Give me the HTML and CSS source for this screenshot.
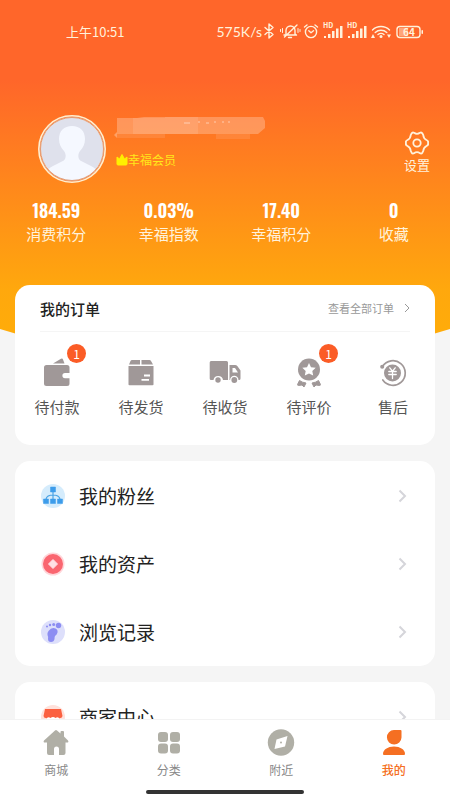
FILE: index.html
```html
<!DOCTYPE html>
<html lang="zh-CN">
<head>
<meta charset="utf-8">
<meta name="viewport" content="width=device-width, initial-scale=1">
<title>我的</title>
<link rel="stylesheet" href="styles.css">
</head>
<body>
<div class="app">
  <main class="content">
    <section class="hero">
      <div class="status">
        <time class="clock">上午10:51</time>
        <div class="signals">
          <span class="speed">575K/s</span>
          <svg width="164" height="20" viewBox="0 0 164 20" fill="none" stroke="currentColor" stroke-width="1.4" stroke-linecap="round" stroke-linejoin="round" aria-hidden="true">
            <path d="M3 6.500l8 7-4 3.500v-14l4 3.500-8 7"/>
            <path d="M22 14h12M24 13V9.500a4.500 4.500 0 0 1 9 0V13l1.500 1M26.500 16.500h3M35 4 22.500 16"/>
            <path d="M20.500 7.500v4M18.500 8.500v2M36 7.500v4M38 8.500v2" stroke-width="1"/>
            <circle cx="49" cy="11" r="5.600"/>
            <path d="m42.500 6 2.500-2M55.500 6 53 4M46.800 9.800 49 11.700l2.500-2"/>
            <g stroke="none" fill="currentColor">
              <text x="61" y="7" font-size="7" font-weight="700">HD</text>
              <text x="85" y="7" font-size="7" font-weight="700">HD</text>
              <rect x="62" y="15" width="2" height="2"/><rect x="66" y="13" width="2.500" height="4"/><rect x="70" y="10" width="2.500" height="7"/><rect x="74" y="7.500" width="2.500" height="9.500"/><rect x="78" y="5" width="2.500" height="12"/>
              <rect x="86" y="15" width="2" height="2"/><rect x="90" y="13" width="2.500" height="4"/><rect x="94" y="10" width="2.500" height="7"/><rect x="98" y="7.500" width="2.500" height="9.500"/><rect x="102" y="5" width="2.500" height="12"/>
              <circle cx="119" cy="15.500" r="1.500"/>
              <path d="m111 13 2 4h-4zM127 17l-2-3.500h4z"/>
              <rect x="137" y="7" width="9" height="8" opacity=".45"/>
              <text x="141" y="14.500" font-size="10" font-weight="700">64</text>
              <rect x="159.500" y="9" width="1.500" height="4" rx=".7"/>
            </g>
            <path d="M110.500 9a12 12 0 0 1 17 0M113.200 11.500a8.500 8.500 0 0 1 11.600 0M116 13.500a5 5 0 0 1 6 0"/>
            <rect x="135" y="5.500" width="23" height="11" rx="3"/>
          </svg>
        </div>
      </div>

      <div class="profile">
        <svg class="avatar" viewBox="0 0 68 68" role="img" aria-label="头像">
          <defs><clipPath id="face"><circle cx="34" cy="34" r="31"/></clipPath></defs>
          <circle cx="34" cy="34" r="33.200" fill="#f78043" stroke="#ffefd0" stroke-width="1.600"/>
          <circle cx="34" cy="34" r="31.800" fill="#fff0df"/>
          <g clip-path="url(#face)">
            <rect width="68" height="68" fill="#dfe1ec"/>
            <path d="M34 11c8 0 13 5 13 13 0 5-2 9-5 12-2 3-2 6-1 8 2 4 14 5 20 14v14H7V58c6-9 18-10 20-14 1-2 1-5-1-8-3-3-5-7-5-12 0-8 5-13 13-13z" fill="#f5f8ff"/>
          </g>
          <circle cx="34" cy="34" r="31.500" fill="none" stroke="#d98a60" stroke-width=".8"/>
        </svg>
        <div class="identity">
          <svg class="masked" viewBox="0 0 156 24" aria-hidden="true">
            <path d="M3 3h20l7-1h119l2 4v7l-7 6H3z" fill="#fff" opacity=".25"/>
            <path d="M19 3h32v16H19zM51 2h33v17H51z" fill="#fff" opacity=".1"/>
            <path d="M3 19h48v4H3zM102 19h34v5h-34z" fill="#fff" opacity=".1"/>
            <path d="m0 20 3-3v6z" fill="#fff" opacity=".3"/>
            <path d="M70 8h6M84 7h2M92 8h3M100 7h2M108 7h2M114 7h2" stroke="#fff" opacity=".5"/>
          </svg>
          <span class="level">
            <svg width="12" height="12" viewBox="0 0 12 12" aria-hidden="true"><path d="m1 3 2.500 2L6 .5 8.500 5 11 3v7q0 1-1 1H2q-1 0-1-1z" fill="#fff000" stroke="#fff000" stroke-linejoin="round"/></svg>幸福会员
          </span>
        </div>
        <button class="settings" type="button">
          <svg width="24" height="24" viewBox="0 0 24 24" fill="none" stroke="currentColor" stroke-width="1.800" stroke-linejoin="round" aria-hidden="true">
            <path d="M6.500 2.600Q7.500 1 9 1.800Q12 3.800 15 1.800Q16.500 1 17.500 2.600L18.300 4.200Q18.500 7.400 21.500 9Q23.700 10 23 12Q23.700 14 21.500 15Q18.500 16.600 18.300 19.800L17.500 21.400Q16.500 23 15 22.200Q12 20.200 9 22.200Q7.500 23 6.500 21.400L5.700 19.800Q5.500 16.600 2.500 15Q.3 14 1 12Q.3 10 2.500 9Q5.500 7.400 5.700 4.200Z"/>
            <circle cx="12" cy="12" r="3.700"/>
          </svg>
          设置
        </button>
      </div>

      <dl class="stats">
        <div><dt>消费积分</dt><dd>184.59</dd></div>
        <div><dt>幸福指数</dt><dd>0.03%</dd></div>
        <div><dt>幸福积分</dt><dd>17.40</dd></div>
        <div><dt>收藏</dt><dd>0</dd></div>
      </dl>
    </section>

    <section class="card orders">
      <header class="orders-head">
        <h2>我的订单</h2>
        <a href="#orders">查看全部订单
          <svg width="6" height="10" viewBox="0 0 6 10" fill="none" stroke="currentColor" aria-hidden="true"><path d="m1 1 4 4-4 4"/></svg>
        </a>
      </header>
      <nav class="order-types">
        <a href="#pay">
          <span class="type-icon">
            <svg width="30" height="30" viewBox="0 0 30 30" fill="currentColor" aria-hidden="true"><path d="M4.500 7H25q2.500 0 2.500 2.500V15H23a2.600 2.600 0 0 0 0 5.200h4.500v5.300q0 2.500-2.500 2.500H4.500Q2 28 2 25.500v-16Q2 7 4.500 7zM11 5.500 19 .8q1.500-.8 2 .7l1.500 4z"/></svg>
            <b class="badge">1</b>
          </span>待付款
        </a>
        <a href="#ship">
          <span class="type-icon">
            <svg width="30" height="30" viewBox="0 0 30 30" fill="currentColor" aria-hidden="true"><path d="M6 2h8v4.500H3L4.500 3Q5 2 6 2zm9.500 0h8q1 0 1.500 1l2 3.500H15.500zM2.500 8h25v18.500q0 .8-1 .8h-23q-1 0-1-.8z"/><path d="M18 17.500h6M15.500 21.800H23" stroke="#fff" stroke-width="1.800"/></svg>
          </span>待发货
        </a>
        <a href="#receive">
          <span class="type-icon">
            <svg width="32" height="30" viewBox="0 0 32 30" fill="currentColor" aria-hidden="true"><path d="M2 3h15.500Q19 3 19 4.500V22h-5a4.800 4.800 0 0 0-9.500 0H2Q.7 22 .7 20.500v-16Q.7 3 2 3z"/><path fill-rule="evenodd" d="M20.500 7H26q1.500 0 2.500 1.200l3 4.300v8q0 1.500-1.500 1.500h-.5a4.200 4.200 0 0 0-8.400 0h-.6zm3 3v4.500H29L26 10z"/><circle cx="9" cy="22" r="2.700"/><circle cx="25.300" cy="22" r="2.900"/></svg>
          </span>待收货
        </a>
        <a href="#review">
          <span class="type-icon">
            <svg width="30" height="30" viewBox="0 0 30 30" fill="currentColor" aria-hidden="true"><circle cx="15" cy="11.500" r="11"/><path d="m15 5 2 4.200 4.700.6-3.400 3.200.9 4.600-4.200-2.200-4.200 2.200.9-4.600-3.400-3.200 4.700-.6z" fill="#fff"/><path d="M5.500 22.500q2.500 2 6.500 2.500l-2 4-2-2-3.500.5q-1 0-1-1zM24.500 22.500q-2.500 2-6.500 2.500l2 4 2-2 3.500.5q1 0 1-1z" stroke="currentColor" stroke-linejoin="round"/></svg>
            <b class="badge">1</b>
          </span>待评价
        </a>
        <a href="#service">
          <span class="type-icon">
            <svg width="30" height="30" viewBox="0 0 30 30" fill="none" stroke="currentColor" stroke-width="1.700" stroke-linecap="round" aria-hidden="true"><path d="M4.500 8.500a12.300 12.300 0 1 1 .3 13.500"/><circle cx="4.200" cy="8.700" r="1.200" fill="currentColor"/><circle cx="14.500" cy="15" r="8.500" fill="currentColor" stroke="none"/><path d="m11.800 9.800 2.700 3.400 2.700-3.400M10.800 13.500h7.400M10.800 16.500h7.400M14.500 13.500v7" stroke="#fff" stroke-width="1.300"/></svg>
          </span>售后
        </a>
      </nav>
    </section>

    <nav class="card menu">
      <a href="#fans">
        <svg class="menu-icon" viewBox="0 0 24 24" aria-hidden="true"><circle cx="12" cy="12" r="12" fill="#d5ecfc"/><path d="M12 7v8M5 15q1-4 7-4t7 4" fill="none" stroke="#4ba4e5" stroke-width="1.200"/><path d="M9.500 3h5v5h-5zM2.500 15h5v4.500h-5zM9.500 15h5v4.500h-5zM16.500 15h5v4.500h-5z" fill="#3d9cea" stroke="#3d9cea" stroke-width=".5" stroke-linejoin="round"/></svg>
        <span>我的粉丝</span>
        <svg class="arrow" viewBox="0 0 9 14" aria-hidden="true"><path d="m1.500 1.500 5.500 5.500-5.500 5.500"/></svg>
      </a>
      <a href="#assets">
        <svg class="menu-icon" viewBox="0 0 24 24" aria-hidden="true"><circle cx="12" cy="12" r="11.500" fill="#ffd6da"/><circle cx="12" cy="12" r="10" fill="#fa6670"/><path d="m12 7.500 4.500 4.500-4.500 4.500L7.500 12z" fill="#ffe0e5" stroke="#ffe0e5" stroke-linejoin="round"/></svg>
        <span>我的资产</span>
        <svg class="arrow" viewBox="0 0 9 14" aria-hidden="true"><path d="m1.500 1.500 5.500 5.500-5.500 5.500"/></svg>
      </a>
      <a href="#history">
        <svg class="menu-icon" viewBox="0 0 24 24" aria-hidden="true"><circle cx="12" cy="12" r="12" fill="#dddffb"/><g fill="#8c8df2"><circle cx="17.500" cy="5.500" r="2.700"/><circle cx="12.700" cy="4.600" r="1.500"/><circle cx="9" cy="5" r="1.200"/><circle cx="6" cy="6.500" r="1"/><path d="M7.500 11q3-4 7-2.500 2.500 1 2 4-.5 2-2.500 3.500-.5 1-.5 3-.5 3-3.500 3-3 0-3-3 .5-2-.5-4-.5-2 1-4z"/></g></svg>
        <span>浏览记录</span>
        <svg class="arrow" viewBox="0 0 9 14" aria-hidden="true"><path d="m1.500 1.500 5.500 5.500-5.500 5.500"/></svg>
      </a>
    </nav>

    <nav class="card menu">
      <a href="#merchant">
        <svg class="menu-icon" viewBox="0 0 24 24" aria-hidden="true"><circle cx="12" cy="12" r="12" fill="#ffe1db"/><path d="M4 4h16l1.500 7a2.500 2.500 0 0 1-3 2V20h-13v-7a2.500 2.500 0 0 1-3-2z" fill="#fb6040"/><path d="M5 14q2-3 4.500-1 2.500-2 5 0 2.500-2 4.500 1v1H5z" fill="#fff"/></svg>
        <span>商家中心</span>
        <svg class="arrow" viewBox="0 0 9 14" aria-hidden="true"><path d="m1.500 1.500 5.500 5.500-5.500 5.500"/></svg>
      </a>
    </nav>
  </main>

  <footer class="bottom">
    <nav class="tabs">
      <a href="#mall">
        <svg width="28" height="28" viewBox="0 0 28 28" fill="currentColor" aria-hidden="true"><path d="M13 2.500q1-1 2 0l3.500 3V4q0-1 1-1h1.500q1 0 1 1v4.500l4 4q1.200 2-1 2H23.500V25q0 2-2 2H17v-6q0-2.500-2.500-2.500T12 21v6H7q-2 0-2-2V14.500H3q-2.200 0-1-2z"/></svg>
        商城
      </a>
      <a href="#category">
        <svg width="28" height="28" viewBox="0 0 28 28" fill="currentColor" aria-hidden="true"><rect x="3" y="4" width="10" height="10" rx="3"/><rect x="15" y="4" width="10" height="10" rx="3"/><rect x="3" y="15.500" width="10" height="10" rx="3"/><rect x="15" y="15.500" width="10" height="10" rx="3"/></svg>
        分类
      </a>
      <a href="#nearby">
        <svg width="28" height="28" viewBox="0 0 28 28" fill="currentColor" aria-hidden="true"><circle cx="14" cy="14.500" r="13.200"/><path d="m9.500 11.500 11-3.500-2.500 10.500L7.500 21z" fill="#fff"/><circle cx="14" cy="14.500" r="1"/></svg>
        附近
      </a>
      <a class="active" href="#me" aria-current="page">
        <svg width="28" height="28" viewBox="0 0 28 28" fill="currentColor" aria-hidden="true"><path d="M14 2h6.500q1 0 1 1v6.500A7.300 7.300 0 1 1 14 2zM3 26q0-3.500 3.500-5.500Q9 18.500 14 18.500t7.500 2Q25 22.500 25 26q0 1-1 1H4q-1 0-1-1z"/></svg>
        我的
      </a>
    </nav>
    <div class="home-bar"></div>
  </footer>
</div>
</body>
</html>
```

FILE: styles.css
```css
* {
  box-sizing: border-box;
}

body {
  margin: 0;
  background: #f5f5f5;
  color: #222;
  font-family: "Noto Sans CJK SC", sans-serif;
}

a {
  color: inherit;
  text-decoration: none;
}

svg {
  display: block;
  flex: none;
}

.app {
  display: flex;
  flex-direction: column;
  height: 100vh;
}

.content {
  flex: 1;
  min-height: 0;
  overflow: hidden;
}

/* Header */
.hero {
  padding-bottom: 103px;
  background: linear-gradient(#ff662a 0, #ff662a 80px, #ff9914 240px, #ffa80d 290px, #ffad08 100%);
  clip-path: polygon(0 0, 100% 0, 100% calc(100% - 20px), 85% 100%, 15% 100%, 0 calc(100% - 20px));
  color: #fff2dc;
}

.status {
  display: flex;
  align-items: center;
  justify-content: space-between;
  height: 62px;
  padding: 0 24px 0 66px;
}

.clock {
  font-size: 13px;
}

.signals {
  display: flex;
  align-items: center;
}

.speed {
  font-family: Lato, sans-serif;
  font-size: 14px;
}

.profile {
  display: flex;
  align-items: flex-start;
  gap: 8px;
  padding: 53px 20px 0 38px;
}

.avatar {
  width: 68px;
  height: 68px;
}

.identity {
  display: flex;
  flex: 1;
  flex-direction: column;
  align-items: flex-start;
  gap: 11px;
}

.masked {
  width: 156px;
  height: 24px;
}

.level {
  display: flex;
  align-items: center;
  padding-left: 2px;
  color: #ffe81a;
  font-size: 12px;
  line-height: 20px;
}

.settings {
  display: flex;
  flex-direction: column;
  align-items: center;
  margin-top: 16px;
  padding: 0;
  border: 0;
  background: none;
  color: inherit;
  font: inherit;
  font-size: 13px;
  line-height: 20px;
}

.stats {
  display: grid;
  grid-template-columns: repeat(4, 1fr);
  margin: 15px 0 0;
  text-align: center;
}

.stats div {
  display: flex;
  flex-direction: column-reverse;
}

.stats dt {
  font-size: 15px;
  line-height: 24px;
}

.stats dd {
  margin: 0;
  color: #fff;
  font-family: Oswald, "Liberation Sans Narrow", sans-serif;
  font-size: 18px;
  font-weight: 600;
  line-height: 24px;
}

/* Cards */
.card {
  margin: 0 15px 16px;
  border-radius: 15px;
  background: #fff;
}

.orders {
  position: relative;
  margin-top: -64px;
  padding-bottom: 26px;
}

.orders-head {
  display: flex;
  align-items: center;
  justify-content: space-between;
  height: 47px;
  margin: 0 25px;
  border-bottom: 1px solid #f5f5f5;
}

.orders-head h2 {
  margin: 0;
  font-size: 15px;
  font-weight: 500;
}

.orders-head a {
  display: flex;
  align-items: center;
  gap: 10px;
  color: #999;
  font-size: 11px;
}

.order-types {
  display: grid;
  grid-template-columns: repeat(5, 1fr);
  padding-top: 26px;
  color: #555;
  font-size: 15px;
  line-height: 24px;
}

.order-types a {
  display: flex;
  flex-direction: column;
  align-items: center;
  gap: 7px;
}

.type-icon {
  position: relative;
  color: #a09898;
}

.badge {
  position: absolute;
  top: -14px;
  right: -14px;
  width: 19px;
  height: 19px;
  border-radius: 50%;
  background: #fb5c26;
  color: #fff;
  font-size: 12px;
  font-weight: 400;
  line-height: 20px;
  text-align: center;
}

.menu {
  padding-top: 1px;
}

.menu a {
  display: flex;
  align-items: center;
  gap: 14px;
  height: 68px;
  padding: 0 28px 0 26px;
  font-size: 19px;
  line-height: 26px;
}

.menu span {
  flex: 1;
}

.menu-icon {
  width: 24px;
  height: 24px;
}

.arrow {
  width: 9px;
  height: 14px;
  fill: none;
  stroke: #d5d5da;
  stroke-width: 2;
}

/* Bottom navigation */
.bottom {
  padding: 8px 0 6px;
  border-top: 1px solid #f3f3f3;
  background: #fff;
}

.tabs {
  display: grid;
  grid-template-columns: repeat(4, 1fr);
}

.tabs a {
  display: flex;
  flex-direction: column;
  align-items: center;
  gap: 5px;
  color: #888;
  font-size: 12px;
  line-height: 18px;
}

.tabs svg {
  color: #b0afa6;
}

.tabs .active,
.tabs .active svg {
  color: #f56f22;
}

.tabs .active {
  font-weight: 500;
}

.home-bar {
  width: 35%;
  height: 4px;
  margin: 11px auto 0;
  border-radius: 2px;
  background: #333;
}
```
